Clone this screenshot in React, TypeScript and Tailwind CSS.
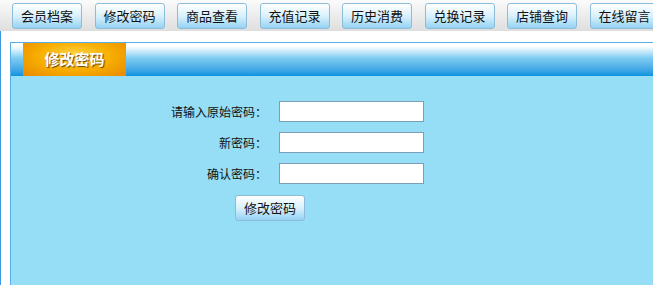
import React from 'react';

const navItems = ['会员档案', '修改密码', '商品查看', '充值记录', '历史消费', '兑换记录', '店铺查询', '在线留言'];

const fields = [
    { label: '请输入原始密码：', name: 'oldpwd' },
    { label: '新密码：', name: 'newpwd' },
    { label: '确认密码：', name: 'repwd' },
];

const btnClass =
    'flex h-[26px] w-[70px] shrink-0 items-center justify-center rounded-[3px] border border-[#8dbcd8] bg-gradient-to-b from-[#ffffff] via-[#d9f1fc] to-[#94d3f3] text-[13px] text-[#111] shadow-[inset_0_1px_0_#ffffff]';

export default function App() {
    return (
        <div
            className="h-[285px] w-[653px] overflow-hidden bg-white"
            style={{ fontFamily: '"Noto Sans CJK SC", "Noto Sans", sans-serif' }}
        >
            {/* top nav */}
            <div className="flex h-[31px] items-start gap-[12.5px] bg-gradient-to-b from-[#fbfbfb] to-[#dedede] pl-[12px] pt-[3px]">
                {navItems.map((item) => (
                    <button key={item} className={btnClass + ' h-[25px]'}>
                        {item}
                    </button>
                ))}
            </div>

            <div className="h-[254px] border-l border-[#3d9be0] pl-[9px] pt-[11px]">
                <div className="flex h-full flex-col border-t border-l border-[#5aaee8]">
                    {/* header bar */}
                    <div className="flex h-[33px] shrink-0 bg-gradient-to-b from-[#ffffff] from-[10%] via-[#7fcdf2] via-[45%] to-[#0393df] pl-[12px]">
                        <div className="flex h-full w-[103px] items-center justify-center bg-[radial-gradient(ellipse_at_50%_40%,#ffd84f_0%,#f7ae00_50%,#e88800_100%)]">
                            <span className="text-[15px] font-bold text-white [text-shadow:1px_1px_1px_#6b4200]">修改密码</span>
                        </div>
                    </div>

                    {/* content */}
                    <div className="flex-1 bg-[#96ddf6] pt-[25px]">
                        <div className="flex flex-col gap-[10px]">
                            {fields.map((f) => (
                                <div key={f.name} className="flex items-center">
                                    <label className="w-[256px] text-right text-[12px] text-[#111]">{f.label}</label>
                                    <input
                                        type="password"
                                        name={f.name}
                                        className="ml-[12px] h-[21px] w-[145px] border border-[#7c9fb8] bg-white"
                                    />
                                </div>
                            ))}
                        </div>
                        <div className="mt-[11px] pl-[224px]">
                            <button className={btnClass}>修改密码</button>
                        </div>
                    </div>
                </div>
            </div>
        </div>
    );
}
